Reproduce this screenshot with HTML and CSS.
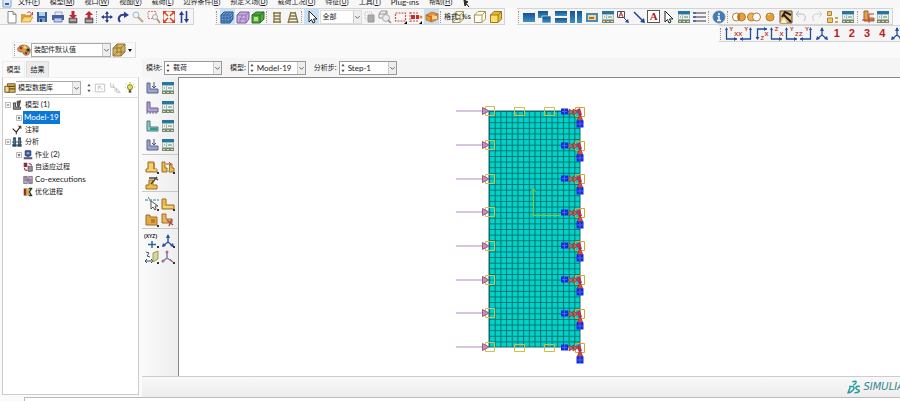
FILE: index.html
```html
<!DOCTYPE html>
<html lang="zh-CN">
<head>
<meta charset="utf-8">
<title>Model-19</title>
<link rel="stylesheet" href="styles.css">
</head>
<body>
<svg class="defs" aria-hidden="true">
  <defs>
    <linearGradient id="blue" x1="0" y1="0" x2="0" y2="1"><stop offset="0" stop-color="#15528c"/><stop offset="1" stop-color="#3d8fc8"/></linearGradient>
    <symbol id="new" viewBox="0 0 14 14"><path d="M3 1.500h5l3 3v8.500H3z" fill="#fff" stroke="#888"/><path d="M8 1.500v3h3" fill="none" stroke="#888"/></symbol>
    <symbol id="open" viewBox="0 0 14 14"><path d="M1 12V4h4l1 1h5v7z" fill="#d9a238"/><path d="M1 12l3-5h9l-3 5z" fill="#ffd774" stroke="#b98322" stroke-width=".6"/><path d="M7 3c2-2 4-1 4.500 1M12.500 2v3h-2.500" fill="none" stroke="#c44b2c"/></symbol>
    <symbol id="save" viewBox="0 0 14 14"><path d="M2 2h10v10H2z" fill="#3562a0"/><path d="M4 2h6v4H4z" fill="#b9d0ea"/><path d="M4 8h6v4H4z" fill="#7c9cc6"/><path d="M5 9h2v3H5z" fill="#24406f"/></symbol>
    <symbol id="print" viewBox="0 0 14 14"><path d="M4 2h7v4H4z" fill="#e8eefb" stroke="#7a8bb5" stroke-width=".7"/><path d="M1 5h12v5H1z" fill="#4a62a4"/><path d="M3 8h8v4H3z" fill="#c3cdeb" stroke="#435a94" stroke-width=".7"/></symbol>
    <symbol id="import" viewBox="0 0 14 14"><path d="M3 8h8v5H3z" fill="#777" stroke="#444" stroke-width=".6"/><path d="M4 10h6" stroke="#ddd"/><path d="M5.500 1h3v4H11l-4 4-4-4h2.500z" fill="#c5252d"/></symbol>
    <symbol id="export" viewBox="0 0 14 14"><path d="M3 8h8v5H3z" fill="#777" stroke="#444" stroke-width=".6"/><path d="M4 11h6" stroke="#ddd"/><path d="M5.500 9h3V5H11L7 1 3 5h2.500z" fill="#c5252d"/></symbol>
    <symbol id="pan" viewBox="0 0 14 14"><path d="M7 2v10M2 7h10" stroke="#2d3f93" stroke-width="1.500"/><path d="M7 1l2 3H5zM7 13l2-3H5zM1 7l3-2v4zM13 7l-3-2v4z" fill="#2d3f93"/></symbol>
    <symbol id="rotate" viewBox="0 0 14 14"><path d="M4 12C1 8 4 4 9 5" fill="none" stroke="#2d3f93" stroke-width="2"/><path d="M8 1.500l5 3.500-5 3z" fill="#2d3f93"/></symbol>
    <symbol id="zoom" viewBox="0 0 14 14"><circle cx="5" cy="5" r="3" fill="#e9f5f8" stroke="#a5b5b8"/><path d="M7 7l5 5" stroke="#c4a679" stroke-width="2"/></symbol>
    <symbol id="boxzoom" viewBox="0 0 14 14"><path d="M1 1.500h8v7H1z" fill="#fff4f3" stroke="#d67772" stroke-dasharray="2 1"/><circle cx="8" cy="7" r="2.500" fill="#edf5f7" stroke="#a9a9a9"/><path d="M10 9l3 4" stroke="#b38b58" stroke-width="1.500"/></symbol>
    <symbol id="fit" viewBox="0 0 14 14"><path d="M1.500 1.500h11v11h-11z" fill="#fff3ed" stroke="#e09a88"/><path d="M2 2l4 4M12 2L8 6M2 12l4-4M12 12L8 8" stroke="#d94428" stroke-width="1.500"/><path d="M1 5V1h4zM9 1h4v4zM1 9v4h4zM13 9v4H9z" fill="#d94428"/></symbol>
    <symbol id="cycle" viewBox="0 0 14 14"><path d="M4.500 4v9M9.500 1v9" stroke="#26418f" stroke-width="1.600"/><path d="M4.500 1L7 5H2zM9.500 13L7 9h5z" fill="#26418f"/></symbol>
    <symbol id="cube-mesh" viewBox="0 0 14 14"><path d="M1 5l3-3h9v7l-3 4H1z" fill="#6b99ce" stroke="#24578f"/><path d="M1 5h9v8M10 5l3-3M4 5v8M7 5v8M1 8h9l3-3M1 11h9l3-3M4 5l3-3M7 5l3-3" fill="none" stroke="#24578f" stroke-width=".7"/></symbol>
    <symbol id="cube-violet" viewBox="0 0 14 14"><path d="M1 5l3-3h9v7l-3 4H1z" fill="#c6afe0" stroke="#79589b"/><path d="M1 5h9v8M10 5l3-3M4 13V9l3-4M4 9h6" fill="none" stroke="#8762ac" stroke-width=".8"/></symbol>
    <symbol id="cube-green" viewBox="0 0 14 14"><path d="M1 5l4-3h8v7l-4 4H1z" fill="#54a83c" stroke="#286d25"/><path d="M1 5h8v8M9 5l4-3" fill="none" stroke="#286d25"/><path d="M3 7h4v4H3z" fill="#b4e288"/></symbol>
    <symbol id="ladder" viewBox="0 0 14 14"><path d="M4 2v11M10 2v11M3 3h8M4 6h6M4 9h6M3 12h8" stroke="#88743d" stroke-width="1.300"/></symbol>
    <symbol id="ladder2" viewBox="0 0 14 14"><path d="M5 2L2 13M9 2l3 11M4 3h6M4 6h6M3 9h8M2 12h10" stroke="#88743d" stroke-width="1.300"/></symbol>
    <symbol id="cursor" viewBox="0 0 14 14"><path d="M4 1v11l2.500-2.500L8 13l2-1-1.500-3H12z" fill="#fff" stroke="#222"/></symbol>
    <symbol id="gray" viewBox="0 0 14 14"><path d="M2 2h7v7H2z" fill="none" stroke="#bbb" stroke-dasharray="1 1"/><path d="M5 5h6v7H5z" fill="#aaa" stroke="#999"/></symbol>
    <symbol id="boxes" viewBox="0 0 14 14"><path d="M1 4l2-3h6v5L7 8H1zM1 4h6v4M7 4l2-3" fill="#eee" stroke="#999"/><circle cx="8" cy="8" r="3.500" fill="#eee" stroke="#aaa"/><path d="M10 10l3 3" stroke="#888" stroke-width="1.500"/></symbol>
    <symbol id="dash" viewBox="0 0 14 14"><path d="M1.500 3h10v8h-10z" fill="none" stroke="#ce5046" stroke-width="1.200" stroke-dasharray="2 1"/><path d="M13 11v3h-3z"/></symbol>
    <symbol id="dash2" viewBox="0 0 14 14"><path d="M1 2v10M1 3h9M1 11h8" fill="none" stroke="#ce5046" stroke-dasharray="2 1"/><path d="M2 5h4v4H2zM7 5h3v4H7z" fill="#c23026"/><circle cx="12" cy="7" r="1.500" fill="#d98b4c"/><path d="M13 11v3h-3z"/></symbol>
    <symbol id="orange" viewBox="0 0 14 14"><path d="M1 5l6-3 6 2v5l-6 3-6-2z" fill="#ed9230" stroke="#af6521" stroke-width=".7"/><path d="M1 5l5 2 7-3M6 7v5" fill="none" stroke="#af6521"/><path d="M7 5l5 1v3H7z" fill="#ffd49c"/></symbol>
    <symbol id="wire" viewBox="0 0 14 14"><path d="M1.500 5L5 1.500h7.500V9L9 12.500H1.500zM1.500 5H9v7.500M9 5l3.500-3.500M5 2v7l-3 3M5 9h7" fill="none" stroke="#a6975d"/></symbol>
    <symbol id="hidden" viewBox="0 0 14 14"><path d="M1.500 5L5 1.500h7.500V9L9 12.500H1.500z" fill="#fffdf0" stroke="#a6975d"/><path d="M1.500 5H9v7.500M9 5l3.500-3.500" fill="none" stroke="#a6975d"/></symbol>
    <symbol id="shaded" viewBox="0 0 14 14"><path d="M1.500 5L5 1.500h7.500V9L9 12.500H1.500z" fill="#e9b82d" stroke="#987a20"/><path d="M2 5h7v7H2z" fill="#ffe069"/><path d="M1.500 5H9v7.500M9 5l3.500-3.500" fill="none" stroke="#987a20"/></symbol>
    <symbol id="vp1" viewBox="0 0 14 14"><path d="M1 3h12v9H1z" fill="url(#blue)"/></symbol>
    <symbol id="vp2" viewBox="0 0 14 14"><path d="M0 1h10v7H0z" fill="url(#blue)"/><path d="M4 6h9v7H4z" fill="url(#blue)" stroke="#fff" stroke-width=".6"/></symbol>
    <symbol id="vp3" viewBox="0 0 14 14"><path d="M1 1h12v5H1z" fill="url(#blue)"/><path d="M1 8h12v5H1z" fill="url(#blue)"/></symbol>
    <symbol id="vp4" viewBox="0 0 14 14"><path d="M1 1h5v12H1z" fill="url(#blue)"/><path d="M8 1h5v12H8z" fill="url(#blue)"/></symbol>
    <symbol id="win" viewBox="0 0 14 14"><path d="M1 3h12v9H1z" fill="#418abb"/><path d="M3 5h8v5H3z" fill="#f2d694"/><path d="M4 7h5v2H4z" fill="#bc6f20"/></symbol>
    <symbol id="table" viewBox="0 0 14 14"><path d="M1 1h12v11H1z" fill="#9ebbc8"/><path d="M1 1h12v3H1z" fill="#2776a2"/><path d="M2 5h3v4H2zM6 5h6v4H6z" fill="#f0f2dc"/><path d="M7 7h4M3 7h1" stroke="#668084"/><path d="M1 10h12v3H1z" fill="#77886f"/><path d="M2 11.500h2M6 11.500h2M10 11.500h2" stroke="#f3df9d"/></symbol>
    <symbol id="note" viewBox="0 0 14 14"><path d="M1.500 1.500h7v6h-7z" fill="#fff" stroke="#514a56"/><path d="M3 7l2-5 2 5M4 5h2" fill="none" stroke="#b13b36"/><path d="M8 8l4 4" stroke="#1d479e"/><path d="M13 13l-4-1 3-3z" fill="#1d479e"/></symbol>
    <symbol id="arrow" viewBox="0 0 14 14"><path d="M2 2l9 9" stroke="#1e4290" stroke-width="1.500"/><path d="M13 13l-5-1 4-4z" fill="#1e4290"/></symbol>
    <symbol id="list" viewBox="0 0 14 14"><path d="M1 3h12M1 7h12M1 11h12" stroke="#334"/><path d="M0 2h3v2H0zM0 6h3v2H0zM0 10h3v2H0z" fill="#536c9b"/></symbol>
    <symbol id="info" viewBox="0 0 14 14"><circle cx="7" cy="7" r="6" fill="#3e7bbb" stroke="#79899b"/><path d="M7 3v2M5.500 6.500H7V10M5 10.500h4" fill="none" stroke="#fff" stroke-width="1.500"/></symbol>
    <symbol id="or1" viewBox="0 0 14 14"><circle cx="4.500" cy="7" r="4" fill="#fff" stroke="#b57c33"/><circle cx="9.500" cy="7" r="4" fill="#eaa039" stroke="#b57c33"/><path d="M7 4v6" stroke="#875323"/></symbol>
    <symbol id="or2" viewBox="0 0 14 14"><circle cx="4.500" cy="7" r="4" fill="#f0b354" stroke="#b57c33"/><circle cx="9.500" cy="7" r="4" fill="#fff" stroke="#b57c33"/></symbol>
    <symbol id="ball" viewBox="0 0 14 14"><circle cx="7" cy="7" r="4" fill="#e5a03a" stroke="#b57c33"/><path d="M5 5l2-1" stroke="#ffe0a0"/></symbol>
    <symbol id="pick" viewBox="0 0 14 14"><path d="M1 1h12v12H1z" fill="#e3bd79" stroke="#655337"/><path d="M12 12L4 4M3 7l3-5 6 3" fill="none" stroke="#241c18" stroke-width="2"/><path d="M1 13l4-5 3 5z" fill="#fff0ba"/></symbol>
    <symbol id="undo" viewBox="0 0 14 14"><path d="M3 4h4c5 0 5 4 3 7M5 1L2 4l3 3" fill="none" stroke="#bbb"/></symbol>
    <symbol id="redo" viewBox="0 0 14 14"><path d="M11 4H7C2 4 2 8 4 11M9 1l3 3-3 3" fill="none" stroke="#ccc"/></symbol>
    <symbol id="parts" viewBox="0 0 14 14"><path d="M1.500 1.500h4v4h-4zM1.500 8h5v4.500h-5z" fill="#f4c65d" stroke="#aa8640"/><path d="M9 7h3v2H9zM9 11h3v2H9z" fill="#c9a250"/></symbol>
    <symbol id="cut" viewBox="0 0 14 14"><path d="M3 1h4v7h6v3H3z" fill="#e1a34d" stroke="#9a6236"/><path d="M8 4h5M8 4v9M1 10h12" fill="none" stroke="#c23b2b"/></symbol>
    <symbol id="axl" viewBox="0 0 14 14"><path d="M2.500 2v10H13" fill="none" stroke="#234e9b" stroke-width="1.300"/><path d="M1 3l1.500-3L4 3zM10 10l3 2-3 2z" fill="#234e9b"/></symbol>
    <symbol id="axr" viewBox="0 0 14 14"><path d="M11.500 2v10H1" fill="none" stroke="#234e9b" stroke-width="1.300"/><path d="M10 3l1.500-3L13 3zM4 10l-3 2 3 2z" fill="#234e9b"/></symbol>
    <symbol id="axt" viewBox="0 0 14 14"><path d="M3.500 12V2H13" fill="none" stroke="#234e9b" stroke-width="1.300"/><path d="M1.500 10l2 3 2-3zM10 0l3 2-3 2z" fill="#234e9b"/></symbol>
    <symbol id="iso" viewBox="0 0 14 14"><path d="M7 1v7L2 12M7 8l5 4" fill="none" stroke="#234e9b" stroke-width="1.300"/><path d="M5 4l2-4 2 4zM1 13l1-4 3 3zM13 13l-1-4-3 3z" fill="#234e9b"/></symbol>
    <symbol id="palette" viewBox="0 0 14 14"><path d="M1 5c2-4 10-4 12 1 1 4-2 7-5 6-3-1-1-3-3-3-3 0-5-1-4-4z" fill="#d59d54" stroke="#765030" stroke-width=".7"/><circle cx="4" cy="5" r="1.500" fill="#b72f29"/><circle cx="8" cy="4" r="1.500" fill="#efdf64"/><circle cx="11" cy="7" r="1.600" fill="#262d26"/><circle cx="9" cy="10" r="1.300" fill="#9b2925"/></symbol>
    <symbol id="trans" viewBox="0 0 14 14"><path d="M1 5l4-4h8v8l-4 4H1z" fill="#d6b45e" stroke="#8c773c"/><path d="M1 5h8v8M9 5l4-4M5 1v8h8M5 9l-4 4" fill="none" stroke="#8c773c"/></symbol>
    <symbol id="db" viewBox="0 0 14 14"><path d="M4 2h9v10H4z" fill="#ddb55d" stroke="#665120"/><path d="M4 5h9M4 8h9" stroke="#665120" stroke-width="1.500"/><path d="M1 5h5v7H1z" fill="#f6d883" stroke="#554924"/></symbol>
    <symbol id="bulb" viewBox="0 0 14 14"><circle cx="7" cy="6" r="3" fill="#e6e14b" stroke="#777528"/><path d="M5.500 9.500h3v3h-3z" fill="#4e5638"/><path d="M7 0v2M2 2l1 1M12 2l-1 1M1 6h1M12 6h1" stroke="#a4a22f"/></symbol>
    <symbol id="upd" viewBox="0 0 14 14"><path d="M1.500 2.500h11v9h-11zM5 5v4M5 5l5 4M8 5h-3" fill="none" stroke="#bbb"/></symbol>
    <symbol id="tr" viewBox="0 0 14 14"><path d="M2 1v5h5v5M5 2v5M9 7v5h4M9 8l4 4" fill="none" stroke="#bbb"/></symbol>
    <symbol id="updown" viewBox="0 0 6 12"><path d="M1 4l2-3 2 3zM1 8l2 3 2-3z" fill="#555"/></symbol>
    <symbol id="chev" viewBox="0 0 8 8"><path d="M1.500 3L4 5.500 6.500 3" fill="none" stroke="#555"/></symbol>
    <symbol id="minus" viewBox="0 0 7 7"><path d="M.5.500h6v6h-6z" fill="#fff" stroke="#aaa"/><path d="M2 3.500h3" stroke="#445"/></symbol>
    <symbol id="plus" viewBox="0 0 7 7"><path d="M.5.500h6v6h-6z" fill="#fff" stroke="#aaa"/><path d="M2 3.500h3M3.500 2v3" stroke="#445"/></symbol>
    <symbol id="models" viewBox="0 0 14 14"><path d="M2 4h3v6h7v3H2z" fill="#8998a0" stroke="#222"/><path d="M7 2l5-1-2 8H8z" fill="#6a6253" stroke="#222"/></symbol>
    <symbol id="pin" viewBox="0 0 14 14"><path d="M1 5l5 5 6-8M6 10v3" fill="none" stroke="#222" stroke-width="1.500"/><path d="M8 1h5v5z" fill="#444"/></symbol>
    <symbol id="analysis" viewBox="0 0 14 14"><path d="M2 1h3v4l1 2-1 2 1 2v2H1v-2l1-2-1-2 1-2zM9 1h3v4l1 2-1 2 1 2v2H8v-2l1-2-1-2 1-2z" fill="#2b5779" stroke="#26343e"/><path d="M3 3v7M10 3v7" stroke="#79aac6"/></symbol>
    <symbol id="job" viewBox="0 0 14 14"><path d="M3 1h8v7H3z" fill="#40539d" stroke="#262d55"/><path d="M5 3h4v3H5z" fill="#6aafe1"/><path d="M1 10h12v3H1z" fill="#575885"/><path d="M5 9h4" stroke="#222"/></symbol>
    <symbol id="adapt" viewBox="0 0 14 14"><path d="M1 1h5v6H1z" fill="#7c3745"/><path d="M7 6h6v7H7z" fill="#9293a0" stroke="#484857"/><path d="M2 8c0 3 1 4 4 4M8 2c3 0 4 1 4 3" fill="none" stroke="#c42c36" stroke-width="1.500"/></symbol>
    <symbol id="coexec" viewBox="0 0 14 14"><path d="M1 2h5v10H1zM8 2h5v10H8z" fill="#b9adc6" stroke="#665d78"/><path d="M2 4h3M2 7h10M9 10h3" stroke="#73415c"/></symbol>
    <symbol id="opt" viewBox="0 0 14 14"><path d="M1 2h4v10H1z" fill="#8c3325"/><path d="M5 2h4v10H5z" fill="#e7ae2f"/><path d="M8 2h5M8 12h5M12 2L9 7l3 5" fill="none" stroke="#243f45" stroke-width="2"/></symbol>
    <symbol id="load" viewBox="0 0 14 14"><path d="M2 2h3v6h8v4H2z" fill="#9aa4d0" stroke="#5d648d"/><path d="M9 1v6M7 5l2 2 2-2" fill="none" stroke="#4e526e"/></symbol>
    <symbol id="bc" viewBox="0 0 14 14"><path d="M2 2h3v6h8v4H2z" fill="#b2a2d4" stroke="#665f8f"/><path d="M1 13h12" stroke="#7e719f" stroke-dasharray="2 1"/></symbol>
    <symbol id="field" viewBox="0 0 14 14"><path d="M2 2h3v6h8v4H2z" fill="#8fc7bd" stroke="#527982"/><path d="M5 9h7v2H5z" fill="#25a18e"/></symbol>
    <symbol id="part" viewBox="0 0 14 14"><path d="M1 9h2V2h6v7h3v3H1z" fill="#edbd47" stroke="#9b712d"/><path d="M5 4v5M7 4v5M2 10h10" stroke="#ffe394"/><path d="M9 3v6" stroke="#b0632e"/></symbol>
    <symbol id="part2" viewBox="0 0 14 14"><path d="M1 2h4v6h8v4H1z" fill="#edbd47" stroke="#9b712d"/><path d="M2 10h10" stroke="#ffe394"/></symbol>
    <symbol id="move" viewBox="0 0 14 14"><path d="M1 2h3v6h2v4H1zM9 4h2v4h2v4H8z" fill="#edbd47" stroke="#9b712d"/><path d="M5 4h5M8 2l2 2-2 2" fill="none" stroke="#b74935"/></symbol>
    <symbol id="part3" viewBox="0 0 14 14"><path d="M1 9h3V4h4v5h4v4H1z" fill="#edbd47" stroke="#9b712d"/><path d="M6 8l6-7M4 2h6l3 2" fill="none" stroke="#4c483c" stroke-width="1.500"/></symbol>
    <symbol id="block" viewBox="0 0 14 14"><path d="M1 2h4v2h7v8H1z" fill="#e4a944" stroke="#9b712d"/><path d="M6 6h4v4H6z" fill="#c27a26"/></symbol>
    <symbol id="part4" viewBox="0 0 14 14"><path d="M1 1h4v5h6v4H1z" fill="#e9b75a" stroke="#9b712d"/><path d="M6 7l6 5M11 6l-3 7" stroke="#ad4b50" stroke-width="1.500"/></symbol>
    <symbol id="query" viewBox="0 0 14 14"><path d="M0 3h14M3 0l8 11" stroke="#397d9d" stroke-dasharray="3 1"/><path d="M6 4v8l2-2 2 3 1-1-1-3h3z" fill="#fff" stroke="#555"/></symbol>
    <symbol id="cross" viewBox="0 0 14 14"><path d="M7 7v7M3 10.500h8" stroke="#26699e" stroke-width="1.500"/></symbol>
    <symbol id="plane" viewBox="0 0 14 14"><path d="M1 2l3 1-2 3 3 1M1 11h6M2 9l-2 2 2 2M6 9l2 2-2 2" fill="none" stroke="#385763"/><path d="M8 3l5-2v8l-5 3z" fill="#d8d894" stroke="#969b5e"/></symbol>
    <symbol id="csys" viewBox="0 0 14 14"><path d="M6 1v7l-5 4M6 8l6 4" fill="none" stroke="#7b80aa" stroke-width="1.500"/><circle cx="6" cy="2" r="1.500" fill="#ae6a94"/><circle cx="2" cy="11" r="1.500" fill="#ae6a94"/><path d="M9 9l4 4" stroke="#b95363"/></symbol>
    <pattern id="mesh" x="310" y="33" width="5.688" height="5.620" patternUnits="userSpaceOnUse"><path d="M0 0h5.688v5.620H0z" fill="#00d3c9"/><path d="M0 .5h6M.5 0v6" stroke="#08706f" stroke-width="1"/></pattern>
    <symbol id="force" viewBox="0 0 40 12" overflow="visible"><path d="M0 6h28" stroke="#b58bbd"/><path d="M29.500 1.500h9v9h-9z" fill="none" stroke="#cdbf51"/><path d="M26.500 2.500L33 6l-6.500 3.500z" fill="#c890ad" stroke="#98558f"/></symbol>
    <symbol id="fix" viewBox="0 0 24 22" overflow="visible"><path d="M13.500 1.500h9v9h-9z" fill="none" stroke="#dda42c"/><path d="M-1 2.500h7v6h-7z" fill="#152adf"/><path d="M2.500 3v5M0 5.500h5" stroke="#4a60f0"/><path d="M7 3v6l5-3zM11 3v6l5-3z" fill="#a86f65" stroke="#882e40" stroke-width=".7"/><path d="M14 4l4-2 2 7-3 1z" fill="#b83251"/><path d="M18 8l-3 7h6z" fill="#d64a38" stroke="#70305c" stroke-width=".7"/><path d="M14.500 14.500h7v7h-7z" fill="#152adf"/><path d="M15 18h6M18 15v6" stroke="#4a60f0"/></symbol>
    <symbol id="ds" viewBox="0 0 14 14"><path d="M5 2c4-2 5 0 1 3M2 6h3c4 1-1 6-4 6l2-5M12 6c-4-1-5 2-2 3s1 3-3 3" fill="none" stroke="#249b96" stroke-width="1.400"/></symbol>
  </defs>
</svg>

<nav class="menu" aria-label="主菜单">
  <svg class="app" viewBox="0 0 10 10" aria-hidden="true"><path d="M1 1h8v8H1z" fill="#dce9fa" stroke="#86a4d0"/><path d="M3 5h4v2H3z" fill="#305daa"/></svg>
  <a href="#">文件(<u>F</u>)</a><a href="#">模型(<u>M</u>)</a><a href="#">视口(<u>W</u>)</a><a href="#">视图(<u>V</u>)</a><a href="#">载荷(<u>L</u>)</a><a href="#">边界条件(<u>B</u>)</a><a href="#">预定义场(<u>D</u>)</a><a href="#">载荷工况(<u>O</u>)</a><a href="#">特征(<u>U</u>)</a><a href="#">工具(<u>T</u>)</a><a class="latin" href="#">Plug-ins</a><a href="#">帮助(<u>H</u>)</a>
  <svg class="app" viewBox="0 0 10 10" aria-hidden="true"><path d="M2 2l1 6 1.500-2L7 9M2 2l4 2-2 1" fill="#222" stroke="#222"/></svg>
</nav>

<div class="bars">
  <div class="bar wide">
    <button><svg><use href="#new"/></svg></button><button><svg><use href="#open"/></svg></button><button><svg><use href="#save"/></svg></button><button><svg><use href="#print"/></svg></button><button><svg><use href="#import"/></svg></button><button><svg><use href="#export"/></svg></button>
    <i class="grip"></i>
    <button><svg><use href="#pan"/></svg></button><button><svg><use href="#rotate"/></svg></button><button><svg><use href="#zoom"/></svg></button><button><svg><use href="#boxzoom"/></svg></button><button><svg><use href="#fit"/></svg></button><button><svg><use href="#cycle"/></svg></button>
  </div>
  <div class="bar display">
    <i class="grip"></i>
    <button class="on"><svg><use href="#cube-mesh"/></svg></button><button><svg><use href="#cube-violet"/></svg></button><button><svg><use href="#cube-green"/></svg></button>
    <i class="grip"></i>
    <button><svg><use href="#ladder"/></svg></button><button><svg><use href="#ladder2"/></svg></button>
    <i class="grip"></i>
    <button class="on"><svg><use href="#cursor"/></svg></button>
    <span class="combo filter"><select aria-label="选择过滤"><option>全部</option></select><svg class="chev"><use href="#chev"/></svg></span>
    <button><svg><use href="#gray"/></svg></button><button><svg><use href="#boxes"/></svg></button><button><svg><use href="#dash"/></svg></button><button><svg><use href="#dash2"/></svg></button><button class="on"><svg><use href="#orange"/></svg></button>
    <i class="grip"></i>
    <button class="format"><span>格式: %s</span><svg><use href="#wire"/></svg></button><button><svg><use href="#hidden"/></svg></button><button><svg><use href="#shaded"/></svg></button>
  </div>
  <div class="bar views">
    <i class="grip"></i>
    <button><svg><use href="#vp1"/></svg></button><button><svg><use href="#vp2"/></svg></button><button><svg><use href="#vp3"/></svg></button><button><svg><use href="#vp4"/></svg></button><button><svg><use href="#win"/></svg></button><button><svg><use href="#table"/></svg></button><button><svg><use href="#note"/></svg></button><button><svg><use href="#arrow"/></svg></button><button class="letter">A</button><button><svg><use href="#cursor"/></svg></button><button><svg><use href="#table"/></svg></button><button><svg><use href="#list"/></svg></button>
    <i class="grip"></i>
    <button><svg><use href="#info"/></svg></button>
    <i class="grip"></i>
    <button><svg><use href="#or1"/></svg></button><button><svg><use href="#or2"/></svg></button><button><svg><use href="#ball"/></svg></button><button><svg><use href="#pick"/></svg></button><button><svg><use href="#undo"/></svg></button><button><svg><use href="#redo"/></svg></button><button><svg><use href="#parts"/></svg></button><button><svg><use href="#table"/></svg></button>
    <i class="grip"></i>
    <button><svg><use href="#cut"/></svg></button><button><svg><use href="#table"/></svg></button>
  </div>
</div>

<div class="second">
  <div class="bar axes">
    <i class="grip"></i>
    <button><svg><use href="#axl"/></svg><b class="tm">Y</b><b class="br">X</b></button><button><svg><use href="#axr"/></svg><b class="tm">Y</b><b class="bl">X</b></button><button><svg><use href="#axt"/></svg><b class="mr">X</b><b class="bm">Z</b></button><button><svg><use href="#axl"/></svg><b class="tm">Z</b><b class="br">X</b></button><button><svg><use href="#axl"/></svg><b class="tm">Y</b><b class="br">Z</b></button><button><svg><use href="#axr"/></svg><b class="tm">Y</b><b class="bl">Z</b></button><button><svg><use href="#iso"/></svg></button>
    <button class="num">1</button><button class="num">2</button><button class="num">3</button><button class="num">4</button><button><svg><use href="#iso"/></svg></button>
  </div>
</div>

<div class="third">
  <div class="bar colour">
    <i class="grip"></i>
    <button><svg><use href="#palette"/></svg></button>
    <span class="combo"><select aria-label="颜色代码"><option>装配件默认值</option></select><svg class="chev"><use href="#chev"/></svg></span>
    <button><svg><use href="#trans"/></svg></button>
    <button class="drop" aria-label="更多"></button>
  </div>
</div>

<main>
  <aside>
    <div class="tabs" role="tablist"><button role="tab" class="active">模型</button><button role="tab">结果</button></div>
    <div class="panel">
      <div class="source">
        <svg><use href="#db"/></svg>
        <span class="combo"><select aria-label="数据源"><option>模型数据库</option></select><svg class="chev"><use href="#chev"/></svg></span>
        <button class="slim"><svg><use href="#updown"/></svg></button><button><svg><use href="#upd"/></svg></button><button><svg><use href="#tr"/></svg></button><button><svg><use href="#bulb"/></svg></button>
      </div>
      <ul class="tree">
        <li><button><svg><use href="#minus"/></svg></button><svg class="ic"><use href="#models"/></svg><span>模型 <em>(1)</em></span></li>
        <li class="sub"><button><svg><use href="#plus"/></svg></button><span class="selected"><em>Model-19</em></span></li>
        <li><i></i><svg class="ic"><use href="#pin"/></svg><span>注释</span></li>
        <li><button><svg><use href="#minus"/></svg></button><svg class="ic"><use href="#analysis"/></svg><span>分析</span></li>
        <li class="sub"><button><svg><use href="#plus"/></svg></button><svg class="ic"><use href="#job"/></svg><span>作业 <em>(2)</em></span></li>
        <li class="sub"><i></i><svg class="ic"><use href="#adapt"/></svg><span>自适应过程</span></li>
        <li class="sub"><i></i><svg class="ic"><use href="#coexec"/></svg><span><em>Co-executions</em></span></li>
        <li class="sub"><i></i><svg class="ic"><use href="#opt"/></svg><span>优化进程</span></li>
      </ul>
    </div>
  </aside>
  <section class="work">
    <form class="context">
      <label for="module">模块:</label>
      <span class="combo"><svg class="spin"><use href="#updown"/></svg><select id="module"><option>载荷</option></select><svg class="chev"><use href="#chev"/></svg></span>
      <label for="model">模型:</label>
      <span class="combo"><svg class="spin"><use href="#updown"/></svg><select id="model" class="latin"><option>Model-19</option></select><svg class="chev"><use href="#chev"/></svg></span>
      <label for="step">分析步:</label>
      <span class="combo"><svg class="spin"><use href="#updown"/></svg><select id="step" class="latin"><option>Step-1</option></select><svg class="chev"><use href="#chev"/></svg></span>
    </form>
    <div class="stage">
      <div class="tools">
        <div class="set roomy">
          <button><svg><use href="#load"/></svg></button><button><svg><use href="#table"/></svg></button>
          <button><svg><use href="#bc"/></svg></button><button><svg><use href="#table"/></svg></button>
          <button><svg><use href="#field"/></svg></button><button><svg><use href="#table"/></svg></button>
          <button><svg><use href="#load"/></svg></button><button><svg><use href="#table"/></svg></button>
        </div>
        <div class="set">
          <button class="more"><svg><use href="#part"/></svg></button><button class="more"><svg><use href="#move"/></svg></button>
          <button><svg><use href="#part3"/></svg></button>
        </div>
        <div class="set">
          <button class="more"><svg><use href="#query"/></svg></button><button class="more"><svg><use href="#part2"/></svg></button>
          <button class="more"><svg><use href="#block"/></svg></button><button><svg><use href="#part4"/></svg></button>
        </div>
        <div class="set">
          <button class="more xyz"><span>(XYZ)</span><svg><use href="#cross"/></svg></button><button class="more"><svg><use href="#iso"/></svg></button>
          <button class="more"><svg><use href="#plane"/></svg></button><button class="more"><svg><use href="#csys"/></svg></button>
        </div>
      </div>
      <svg class="viewport" viewBox="0 0 721 298" preserveAspectRatio="xMidYMid meet" role="img" aria-label="网格模型">
        <path d="M310 33h91v236h-91z" fill="url(#mesh)" stroke="#11696b"/>
        <g fill="none" stroke="#ccbf45"><path d="M335.500 29.500h10v8h-10zM365.500 29.500h10v8h-10zM335.500 266.500h10v7h-10zM365.500 266.500h10v7h-10z"/></g>
        <path d="M354.500 112v25.500H382M352 114l2.500-3 2.500 3" fill="none" stroke="#8fc22e"/>
        <g>
          <use href="#force" x="277" y="27" width="40" height="12"/><use href="#force" x="277" y="61" width="40" height="12"/><use href="#force" x="277" y="95" width="40" height="12"/><use href="#force" x="277" y="128" width="40" height="12"/><use href="#force" x="277" y="162" width="40" height="12"/><use href="#force" x="277" y="196" width="40" height="12"/><use href="#force" x="277" y="229" width="40" height="12"/><use href="#force" x="277" y="263" width="40" height="12"/>
          <use href="#fix" x="383" y="28" width="24" height="22"/><use href="#fix" x="383" y="62" width="24" height="22"/><use href="#fix" x="383" y="95" width="24" height="22"/><use href="#fix" x="383" y="129" width="24" height="22"/><use href="#fix" x="383" y="162" width="24" height="22"/><use href="#fix" x="383" y="196" width="24" height="22"/><use href="#fix" x="383" y="230" width="24" height="22"/><use href="#fix" x="383" y="264" width="24" height="22"/>
        </g>
      </svg>
    </div>
    <footer><svg><use href="#ds"/></svg><span>SIMULIA</span></footer>
  </section>
</main>
<div class="status"><div></div></div>
</body>
</html>
```
FILE: styles.css
```css
* { box-sizing: border-box; }
body {
  margin: 0;
  height: 100vh;
  display: flex;
  flex-direction: column;
  overflow: hidden;
  background: #fafafa;
  color: #222;
  font: 7px/12px "Noto Sans", "Noto Sans CJK SC", sans-serif;
}
button, select { font: inherit; color: inherit; }
button {
  display: flex;
  align-items: center;
  justify-content: center;
  flex: none;
  position: relative;
  width: 15px;
  height: 15px;
  padding: 0;
  border: 0;
  background: none;
}
button svg, .source > svg { width: 14px; height: 14px; flex: none; }
.defs { position: absolute; width: 0; height: 0; }
.latin, em { font-family: Lato, "Noto Sans", sans-serif; font-size: 8px; font-style: normal; }

.menu {
  display: flex;
  align-items: flex-end;
  gap: 10px;
  height: 8px;
  padding-left: 2px;
  overflow: hidden;
  flex: none;
  background: #f7f7f7;
}
.menu a { color: #222; text-decoration: none; white-space: nowrap; flex: none; }
.menu .app { width: 10px; height: 10px; flex: none; }
.menu .app:first-child { margin-right: -4px; }

.bars { display: flex; height: 17px; flex: none; }
.bar {
  display: flex;
  align-items: center;
  justify-content: space-between;
  flex: none;
  height: 17px;
  padding: 0 1px;
  background: #f5f5f5;
  border: solid #d4d4d4;
  border-width: 1px 1px 1px 0;
}
.bar .on { background: #c8e0f3; }
.wide { width: 194px; padding-left: 4px; margin-right: 21px; }
.display { width: 290px; margin-right: 12px; }
.views { width: 376px; }
.grip { width: 3px; height: 12px; border-left: 1px dotted #999; }
.letter {
  width: 13px;
  height: 13px;
  border: 1px solid #555;
  background: #fff;
  color: #b01820;
  font: bold 11px/11px "Liberation Serif", serif;
}
.format { width: 29px; }
.format span { position: absolute; inset: 0; font-size: 7px; line-height: 15px; white-space: nowrap; }

.second { display: flex; justify-content: flex-end; height: 17px; flex: none; overflow: hidden; }
.axes { width: 187px; margin-right: -6px; border-right: 0; }
.axes b { position: absolute; color: #c03a32; font: bold 6px/6px "Liberation Sans", sans-serif; }
.tm { top: 0; left: 6px; }
.br { bottom: 4px; right: 0; }
.bl { bottom: 4px; left: 0; }
.mr { top: 5px; right: 0; }
.bm { bottom: 0; left: 7px; }
.axes .num { color: #c02020; font: bold 11px/15px "Liberation Sans", sans-serif; }

.third { height: 16px; padding-left: 12px; flex: none; }
.colour { width: 124px; height: 16px; background: #fafafa; border-width: 1px; border-color: #eee #ddd #ddd #eee; }
.colour .combo { width: 80px; }
.colour .drop { width: 8px; }
.drop::before { content: ""; border: solid transparent; border-width: 3px 2px 0; border-top-color: #111; }

.combo {
  display: flex;
  align-items: center;
  flex: none;
  height: 14px;
  background: #fff;
  border: 1px solid #aaa;
}
.combo select {
  appearance: none;
  flex: 1;
  min-width: 0;
  height: 12px;
  padding: 0 2px;
  border: 0;
  border-radius: 0;
  background: none;
}
.combo .latin { font-family: Lato, "Noto Sans", sans-serif; font-size: 8px; }
.combo .chev { width: 8px; height: 12px; flex: none; background: #eee; border-left: 1px solid #ccc; }
.combo .spin { width: 6px; height: 10px; flex: none; }
.filter { width: 42px; border-color: #ddd; }

main { display: flex; flex: 1; min-height: 0; }
aside { display: flex; flex-direction: column; width: 142px; padding: 3px 3px 2px 2px; flex: none; }
.tabs { display: flex; gap: 1px; height: 16px; }
.tabs button { width: 23px; height: 16px; background: #ececec; border: 1px solid #ddd; border-bottom: 0; }
.tabs .active { background: #fafafa; border-color: #eee; }
.panel { flex: 1; background: #fff; border: 1px solid #ccc; border-top-color: #eee; }
.source { display: flex; align-items: center; height: 19px; padding-left: 1px; }
.source > svg { width: 12px; height: 12px; }
.source .combo { width: 65px; border-left: 0; margin-right: 4px; }
.source .slim { width: 7px; }
.source .slim svg { width: 6px; height: 10px; }
.source button svg { width: 12px; height: 12px; }
.tree {
  display: grid;
  grid-auto-rows: 1fr;
  height: 99px;
  margin: 0;
  padding: 0 0 0 1px;
  border-top: 1px solid #ddd;
  list-style: none;
}
.tree li { display: flex; align-items: center; white-space: nowrap; }
.tree li.sub { padding-left: 11px; }
.tree button, .tree i { width: 7px; height: 7px; margin-right: 1px; flex: none; }
.tree button svg { width: 6px; height: 6px; }
.tree .ic { width: 10px; height: 10px; margin-right: 3px; flex: none; }
.tree .sub .ic { margin-right: 2px; }
.tree .selected { padding: 0 1px; color: #fff; background: #0a78d4; }

.work { display: flex; flex-direction: column; flex: 1; min-width: 0; }
.context {
  display: flex;
  align-items: center;
  height: 19px;
  padding-left: 4px;
  background: #f5f5f5;
  flex: none;
}
.context .combo { width: 58px; margin: 0 8px 0 2px; border-color: #999; }
.stage { display: flex; flex: 1; min-height: 0; }
.tools { width: 36px; flex: none; background: linear-gradient(90deg, #fafafa, #eee); }
.set {
  display: grid;
  grid-template-columns: 16px 16px;
  grid-auto-rows: 16px;
  padding: 4px 2px 0;
  border-bottom: 1px solid #c8c8c8;
}
.set:last-child { border-bottom: 0; }
.set.roomy { grid-auto-rows: 19px; padding: 1px 2px 0; }
.roomy button { align-self: center; }
.tools .more::after {
  content: "";
  position: absolute;
  right: 0;
  bottom: 0;
  border: 1px solid #333;
}
.tools .xyz span {
  position: absolute;
  top: 0;
  left: 0;
  font: bold 5px/6px "Liberation Sans", sans-serif;
}
.viewport {
  flex: 1;
  min-width: 0;
  height: 100%;
  background: #fff;
  border-top: 1px solid #888;
  border-left: 1px solid #888;
}
footer {
  display: flex;
  align-items: center;
  justify-content: flex-end;
  height: 21px;
  flex: none;
  overflow: hidden;
  border-top: 1px solid #ccc;
  background: linear-gradient(#f8f8f8, #ededed);
  color: #35858e;
  font: italic 10px/14px "DejaVu Sans", sans-serif;
}
footer svg { width: 15px; height: 15px; margin-right: 1px; flex: none; }
footer span { margin-right: -4px; }
.status { height: 4px; padding-left: 24px; flex: none; background: #fafafa; }
.status div { height: 4px; background: #fff; border: solid #bbb; border-width: 1px 0 0 1px; }
```
